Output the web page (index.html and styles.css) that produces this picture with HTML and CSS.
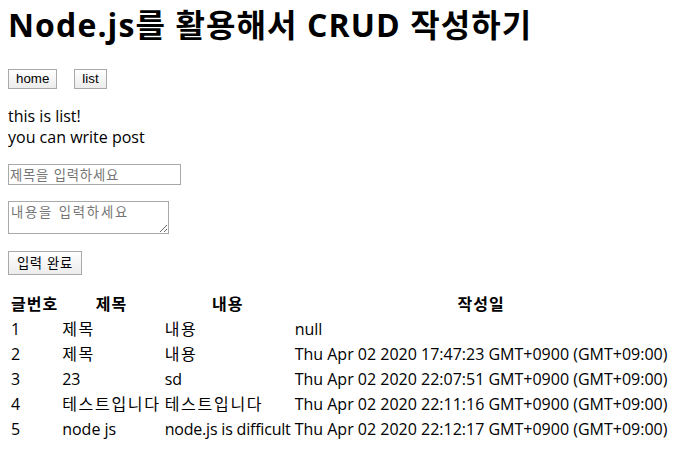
FILE: index.html
```html
<!DOCTYPE html>
<html lang="ko">
<head>
<meta charset="utf-8">
<title>CRUD</title>
<link rel="stylesheet" href="styles.css">
</head>
<body>
<h1 class="title">Node.js를 활용해서 CRUD 작성하기</h1>
<nav class="nav">
  <button class="btn" type="button">home</button>
  <button class="btn" type="button">list</button>
</nav>
<p class="intro">this is list!<br>you can write post</p>
<form class="post-form">
  <input class="field" type="text" placeholder="제목을 입력하세요">
  <textarea class="area" placeholder="내용을 입력하세요"></textarea>
  <button class="btn btn-submit" type="button">입력 완료</button>
</form>
<table class="posts">
  <thead>
    <tr><th>글번호</th><th>제목</th><th>내용</th><th>작성일</th></tr>
  </thead>
  <tbody>
    <tr><td>1</td><td class="ko">제목</td><td class="ko">내용</td><td>null</td></tr>
    <tr><td>2</td><td class="ko">제목</td><td class="ko">내용</td><td>Thu Apr 02 2020 17:47:23 GMT+0900 (GMT+09:00)</td></tr>
    <tr><td>3</td><td>23</td><td>sd</td><td>Thu Apr 02 2020 22:07:51 GMT+0900 (GMT+09:00)</td></tr>
    <tr><td>4</td><td class="ko">테스트입니다</td><td class="ko">테스트입니다</td><td>Thu Apr 02 2020 22:11:16 GMT+0900 (GMT+09:00)</td></tr>
    <tr><td>5</td><td>node js</td><td class="tight">node.js is difficult</td><td>Thu Apr 02 2020 22:12:17 GMT+0900 (GMT+09:00)</td></tr>
  </tbody>
</table>
</body>
</html>
```

FILE: styles.css
```css
html, body {
  background: #fff;
}
body {
  margin: 4px 8px 0;
  font-family: "Open Sans", "Noto Sans CJK KR", sans-serif;
  font-size: 16px;
  line-height: 21px;
  color: #000;
}
.title {
  margin: 0 0 22px;
  height: 42px;
  font-size: 32px;
  line-height: 42px;
  font-weight: 700;
  letter-spacing: 1.1px;
  white-space: nowrap;
}
.nav {
  display: flex;
  gap: 17px;
  padding-top: 1px;
  height: 20px;
  margin-bottom: 17px;
}
.btn {
  box-sizing: border-box;
  height: 20px;
  padding: 0 7px;
  margin: 0;
  border: 1px solid #a9a9a9;
  border-radius: 0;
  background: linear-gradient(#ffffff, #ececec);
  font-family: "Liberation Sans", "Noto Sans CJK KR", sans-serif;
  font-size: 13.33px;
  line-height: 18px;
  color: #000;
}
.intro {
  margin: 0 0 16px;
}
.post-form {
  display: flex;
  flex-direction: column;
  align-items: flex-start;
  margin: 0 0 16px;
}
.field {
  box-sizing: border-box;
  width: 173px;
  height: 21px;
  margin: 0 0 16px;
  padding: 0 1px;
  border: 1px solid #a9a9a9;
  font-family: "Noto Sans CJK KR", sans-serif;
  font-size: 13.33px;
  letter-spacing: 0.8px;
}
.area {
  box-sizing: border-box;
  width: 161px;
  height: 33px;
  margin: 0 0 17px;
  padding: 1px 2px;
  border: 1px solid #a9a9a9;
  font-family: "Noto Sans CJK KR", sans-serif;
  font-size: 13.33px;
  line-height: 17px;
  letter-spacing: 1.8px;
}
.field::placeholder,
.area::placeholder {
  color: #757575;
}
.btn-submit {
  height: 24px;
  padding: 0 8px;
  font-family: "Noto Sans CJK KR", sans-serif;
  font-size: 13.33px;
  line-height: 20px;
  letter-spacing: 0.6px;
}
.posts {
  border-spacing: 2px;
  margin-top: 1px;
  font-size: 16px;
  line-height: 21px;
}
.posts th,
.posts td {
  padding: 1px;
  white-space: nowrap;
}
.posts th {
  font-weight: 700;
  text-align: center;
  letter-spacing: 1px;
}
.posts td {
  text-align: left;
}
.posts .ko {
  letter-spacing: 1.7px;
}
.posts .tight {
  letter-spacing: -0.2px;
}
```
